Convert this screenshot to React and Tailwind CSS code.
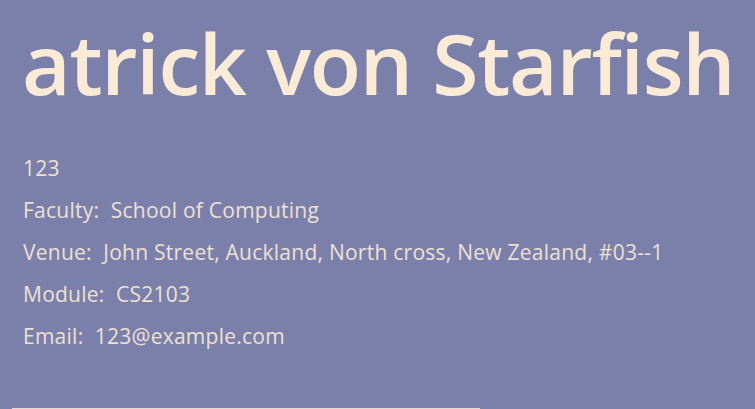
export default function App() {
  const rows = [
    { label: "", value: "123" },
    { label: "Faculty:", value: "School of Computing" },
    { label: "Venue:", value: "John Street, Auckland, North cross, New Zealand, #03--1" },
    { label: "Module:", value: "CS2103" },
    { label: "Email:", value: "123@example.com" },
  ];

  return (
    <div
      className="w-[755px] h-[409px] overflow-hidden bg-[#7b80ab] flex flex-col"
      style={{ fontFamily: '"Open Sans", "Noto Sans", sans-serif' }}
    >
      {/* Name */}
      <h1 className="pl-[22px] pt-[8px] text-[84px] leading-[110px] font-semibold text-[#faebd7] whitespace-nowrap tracking-[-1.3px]">
        atrick von Starfish
      </h1>

      {/* Details */}
      <div className="pl-[23px] pt-[36px] flex flex-col gap-[14px] text-[21px] leading-[28px] tracking-[0.25px] text-[#eee0d2]">
        {rows.map((r, i) => (
          <div key={i} className="whitespace-pre">
            {r.label ? `${r.label}  ${r.value}` : r.value}
          </div>
        ))}
      </div>

      <div className="flex-1" />

      <div className="ml-[12px] w-[468px] h-[1px] bg-[#e2d8d6]" />
    </div>
  );
}
